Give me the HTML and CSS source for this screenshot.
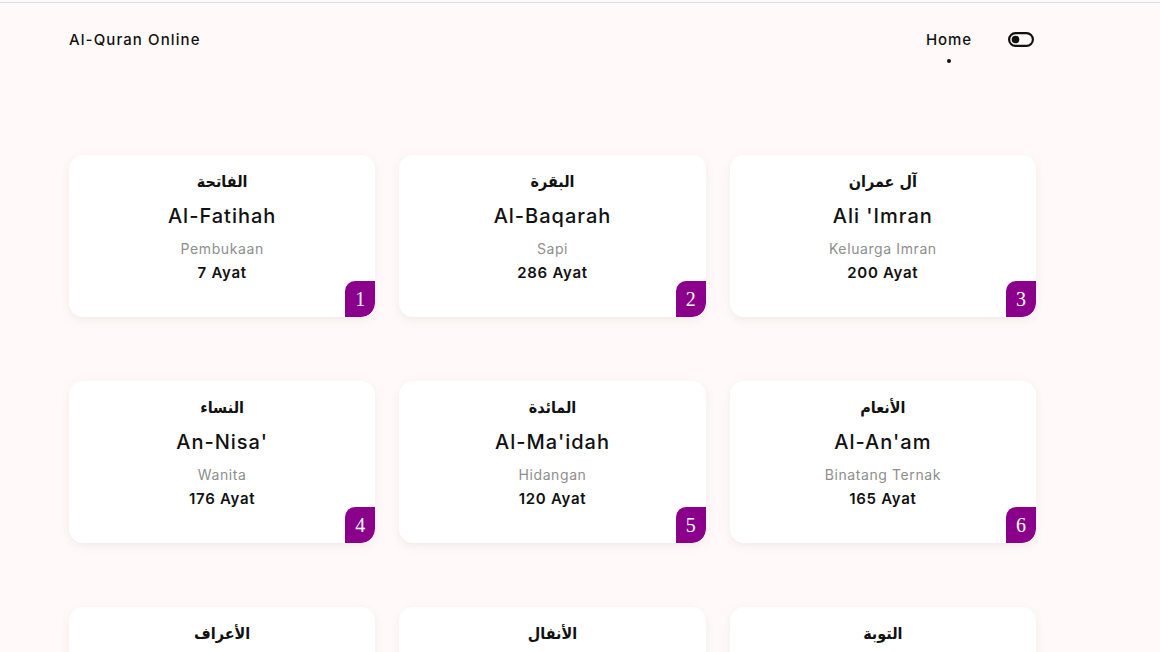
FILE: index.html
```html
<!DOCTYPE html>
<html lang="id">
<head>
<meta charset="utf-8">
<title>Al-Quran Online</title>
<link rel="stylesheet" href="styles.css">
</head>
<body>
<div class="topline"></div>
<div class="page">
  <header class="header">
    <div class="brand">Al-Quran Online</div>
    <nav class="nav">
      <a class="nav-link active" href="#">Home</a>
      <button class="toggle" aria-label="Tema">
        <svg width="26" height="15" viewBox="0 0 26 15"><rect x="1.1" y="1.1" width="23.8" height="12.8" rx="6.4" fill="none" stroke="#111" stroke-width="2.2"/><circle cx="7.5" cy="7.5" r="3.8" fill="#111"/></svg>
      </button>
    </nav>
  </header>

  <main class="grid">
    <div class="card"><div class="ar">الفاتحة</div><div class="name">Al-Fatihah</div><div class="mean">Pembukaan</div><div class="ayat">7 Ayat</div><span class="num">1</span></div>
    <div class="card"><div class="ar">البقرة</div><div class="name">Al-Baqarah</div><div class="mean">Sapi</div><div class="ayat">286 Ayat</div><span class="num">2</span></div>
    <div class="card"><div class="ar">آل عمران</div><div class="name">Ali 'Imran</div><div class="mean">Keluarga Imran</div><div class="ayat">200 Ayat</div><span class="num">3</span></div>
    <div class="card"><div class="ar">النساء</div><div class="name">An-Nisa'</div><div class="mean">Wanita</div><div class="ayat">176 Ayat</div><span class="num">4</span></div>
    <div class="card"><div class="ar">المائدة</div><div class="name">Al-Ma'idah</div><div class="mean">Hidangan</div><div class="ayat">120 Ayat</div><span class="num">5</span></div>
    <div class="card"><div class="ar">الأنعام</div><div class="name">Al-An'am</div><div class="mean">Binatang Ternak</div><div class="ayat">165 Ayat</div><span class="num">6</span></div>
    <div class="card"><div class="ar">الأعراف</div><div class="name">Al-A'raf</div><div class="mean">Tempat Tertinggi</div><div class="ayat">206 Ayat</div><span class="num">7</span></div>
    <div class="card"><div class="ar">الأنفال</div><div class="name">Al-Anfal</div><div class="mean">Rampasan Perang</div><div class="ayat">75 Ayat</div><span class="num">8</span></div>
    <div class="card"><div class="ar">التوبة</div><div class="name">At-Taubah</div><div class="mean">Pengampunan</div><div class="ayat">129 Ayat</div><span class="num">9</span></div>
  </main>
</div>
</body>
</html>
```

FILE: styles.css
```css
* { box-sizing: border-box; }
html, body { margin: 0; padding: 0; }
body {
  background: #fffaf9;
  font-family: "Inter", "Open Sans", sans-serif;
  color: #111;
  overflow: hidden;
  height: 652px;
}
.topline {
  margin-top: 2px;
  height: 1px;
  background: #d6dde4;
}
.page {
  width: 967px;
  margin-left: 69px;
}
.header {
  display: flex;
  justify-content: space-between;
  align-items: center;
  height: 72px;
}
.brand {
  font-size: 15px;
  font-weight: 500;
  letter-spacing: 1.1px;
}
.nav {
  display: flex;
  align-items: center;
  gap: 36px;
  margin-right: 2px;
}
.nav-link {
  position: relative;
  font-size: 15px;
  font-weight: 500;
  letter-spacing: 0.9px;
  color: #111;
  text-decoration: none;
}
.nav-link.active::after {
  content: "";
  position: absolute;
  left: 50%;
  top: 29px;
  width: 4px;
  height: 4px;
  margin-left: -2px;
  border-radius: 50%;
  background: #111;
}
.toggle {
  border: 0;
  background: none;
  padding: 0;
  display: flex;
}
.grid {
  display: grid;
  grid-template-columns: repeat(3, 1fr);
  column-gap: 24px;
  row-gap: 64px;
  padding-top: 80px;
}
.card {
  position: relative;
  height: 162px;
  background: #fff;
  border-radius: 14px;
  box-shadow: 0 3px 10px rgba(120, 90, 90, 0.10);
  display: flex;
  flex-direction: column;
  align-items: center;
  padding-top: 15px;
  overflow: hidden;
}
.ar {
  font-family: "DejaVu Sans Condensed", "DejaVu Sans", sans-serif;
  font-weight: bold;
  font-size: 16px;
  line-height: 24px;
  direction: rtl;
}
.name {
  margin-top: 8px;
  font-size: 20px;
  font-weight: 500;
  letter-spacing: 1px;
  line-height: 28px;
}
.mean {
  margin-top: 9px;
  font-size: 14px;
  color: #8e8e8e;
  letter-spacing: 0.6px;
  line-height: 20px;
}
.ayat {
  margin-top: 3px;
  font-size: 15px;
  font-weight: 600;
  letter-spacing: 0.7px;
  line-height: 22px;
}
.num {
  position: absolute;
  right: 0;
  bottom: 0;
  width: 30px;
  height: 36px;
  background: #8b008b;
  color: #fff;
  border-radius: 10px 0 14px 0;
  font-family: "Liberation Serif", serif;
  font-size: 20px;
  display: flex;
  align-items: center;
  justify-content: center;
}
```
